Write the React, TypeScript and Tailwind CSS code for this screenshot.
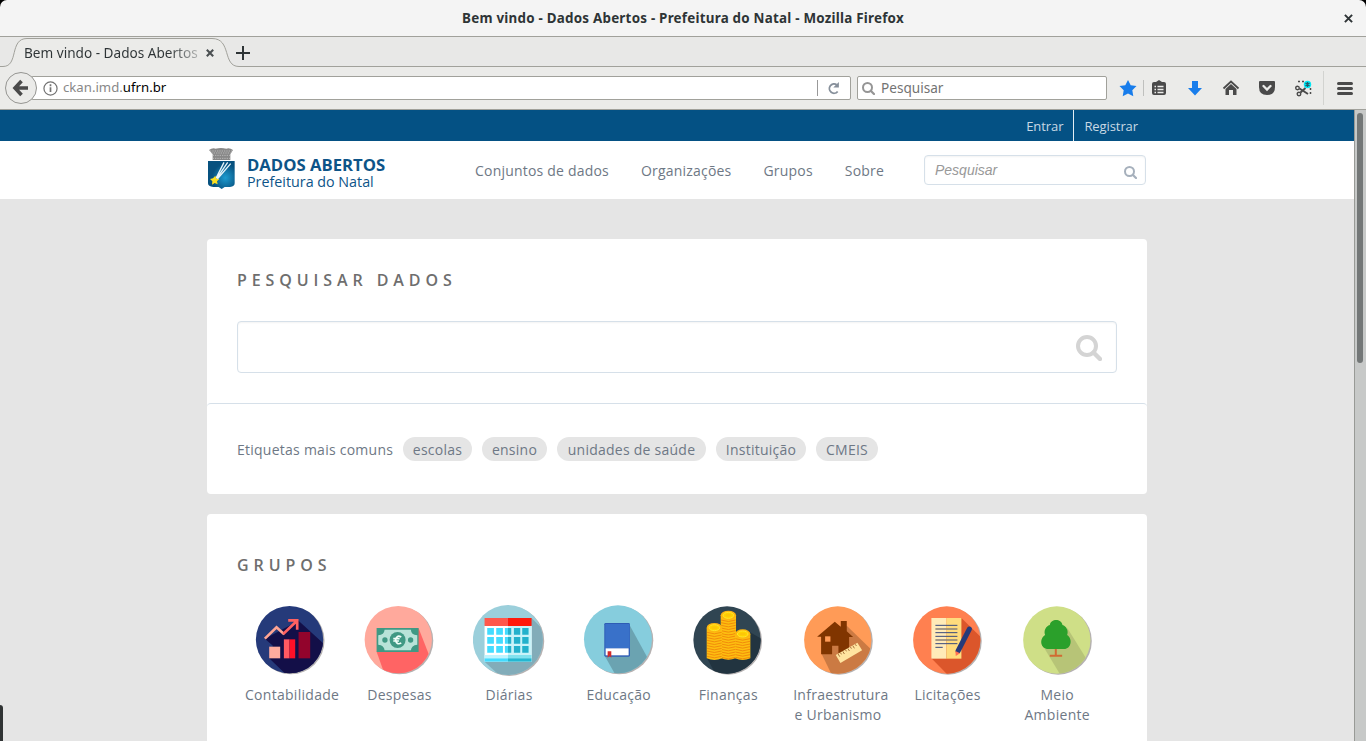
import React from "react";

type Art = { label: string[]; box: string; cx: number; cy: number; r: number; bg: string; shadow: string; shadowColor: string; drawing: React.ReactNode };

const coinStack = (x: number, top: number, bottom: number) => {
  const lines: React.ReactNode[] = [];
  for (let y = top + 14; y < bottom - 4; y += 8) {
    lines.push(<path key={y} d={`M${x - 22} ${y}q22 9 44 0`} stroke="#f28c0a" strokeWidth="3" fill="none" />);
  }
  return (
    <g>
      <path d={`M${x - 23} ${top}V${bottom - 5}q23 10 46 0V${top}z`} fill="#fdbd10" />
      {lines}
      <ellipse cx={x} cy={top} rx="23" ry="14" fill="#fdb510" />
      <ellipse cx={x} cy={top} rx="16" ry="9" fill="#ffd200" stroke="#ffe62a" strokeWidth="3" />
      <ellipse cx={x} cy={top} rx="9" ry="4" fill="#fcc60a" />
    </g>
  );
};

const groups: Art[] = [
  {
    label: ["Contabilidade"], box: "41.4 27 216 216", cx: 148, cy: 134, r: 101, bg: "#253a7a",
    shadow: "M74 131L175 77L260 155V260H160L87 190L98 152z", shadowColor: "#130f48",
    drawing: (
      <g>
        <path d="M74 131L109 97L132 118" stroke="#ffa493" strokeWidth="8" fill="none" />
        <path d="M129 117L169 79M144 76h27v28" stroke="#ff6161" strokeWidth="8" fill="none" />
        <path d="M87 155h33v35H87z" fill="#ffac9e" />
        <path d="M131 133h17v57h-17z" fill="#ff5a62" /><path d="M148 133h17v57h-17z" fill="#ff1028" />
        <path d="M175 111h35v79h-35z" fill="#92042c" />
      </g>
    ),
  },
  {
    label: ["Despesas"], box: "370.2 27 216 216", cx: 476, cy: 134, r: 101, bg: "#ffa99c",
    shadow: "M411 170L537 100L580 210L540 260H443z", shadowColor: "#ff6464",
    drawing: (
      <g>
        <path d="M411 99h126v72H411z" fill="#409984" />
        <path d="M435 104h79q0 15 19 17v28q-18 2-19 17h-79q-1-15-19-17v-28q18-2 19-17z" fill="#b8e3d8" />
        <circle cx="474" cy="135" r="24" fill="#409984" />
        <circle cx="436" cy="135" r="8" fill="#409984" /><circle cx="513" cy="135" r="8" fill="#409984" />
        <path d="M485 126q-14-8-17 9q3 16 17 9M461 131h19M461 138h17" fill="none" stroke="#f3fffa" strokeWidth="5" />
      </g>
    ),
  },
  {
    label: ["Diárias"], box: "39.3 27 216 216", cx: 144, cy: 135, r: 105, bg: "#9bcfdb",
    shadow: "M215 69L270 124V270H150L74 200z", shadowColor: "#82acb9",
    drawing: (
      <g>
        <path d="M74 92h141v108H74z" fill="#fff" /><path d="M144 92h71v108h-71z" fill="#c9f3f9" />
        <path d="M74 69h70v24H74z" fill="#ff574b" /><path d="M144 69h71v24h-71z" fill="#ff190b" />
        {[99, 126, 153].map((y) => (
          <g key={y}>
            <path d={`M82 ${y}h20v20H82zM109 ${y}h20v20h-20zM135 ${y}h9v20h-9z`} fill="#43dcff" />
            <path d={`M144 ${y}h10v20h-10zM162 ${y}h19v20h-19zM187 ${y}h19v20h-19z`} fill="#24b1cc" />
          </g>
        ))}
        <path d="M74 180h70v10H74z" fill="#bef4ff" /><path d="M144 180h71v10h-71z" fill="#82e2ef" />
        <path d="M74 190h70v10H74z" fill="#43dcff" /><path d="M144 190h71v10h-71z" fill="#24b7d1" />
      </g>
    ),
  },
  {
    label: ["Educação"], box: "368.1 27 216 216", cx: 473, cy: 133, r: 102, bg: "#86cddd",
    shadow: "M509 92L590 240L540 270L487 278L433 182z", shadowColor: "#6ba3b1",
    drawing: (
      <g>
        <rect x="432" y="84" width="77" height="101" rx="4" fill="#2e5cb5" />
        <path d="M435 87h73v72h-73z" fill="#3971c9" /><path d="M436 160h69v21h-69z" fill="#fff" />
        <path d="M442 169h11v19l-5-5l-6 5z" fill="#d12b2b" />
      </g>
    ),
  },
  {
    label: ["Finanças"], box: "36.9 27 216 216", cx: 142, cy: 135, r: 101, bg: "#304552",
    shadow: "M211 112L260 140V260H120L82 190z", shadowColor: "#223440",
    drawing: <g>{coinStack(146, 61, 194)}{coinStack(104, 98, 195)}{coinStack(189, 117, 195)}</g>,
  },
  {
    label: ["Infraestrutura", "e Urbanismo"], box: "365.7 27 216 216", cx: 473, cy: 135, r: 101, bg: "#ff9b57",
    shadow: "M425 178L500 92L600 189L510 270H470z", shadowColor: "#cb7a43",
    drawing: (
      <g>
        <path d="M411 125L464 80L482 95V78h18v31l19 17h-12v52h-32v-26h-19v26h-33v-53z" fill="#803500" />
        <path d="M435 124h16v16h-16z" fill="#ff9b57" />
        <path d="M467 180L532 143L546 166L481 204z" fill="#ffe4a0" />
        <path d="M474 177l5 8M481 173l3 5M488 169l5 8M496 164l3 5M503 160l5 8M511 156l3 5M518 152l5 8M526 148l3 5" stroke="#aa733d" strokeWidth="3" />
      </g>
    ),
  },
  {
    label: ["Licitações"], box: "34.8 27 216 216", cx: 139, cy: 135, r: 101, bg: "#ff8050",
    shadow: "M183 69L270 155V270H172L93 190z", shadowColor: "#db562b",
    drawing: (
      <g>
        <path d="M93 69h45v122H93z" fill="#ffebb8" /><path d="M138 69h45v122h-45z" fill="#ffdc7d" />
        <path d="M105 91h66M105 113h66M105 124h66M105 146h66M105 157h22" stroke="#384a7d" strokeWidth="3" />
        <path d="M105 102h66M105 135h66" stroke="#888077" strokeWidth="4" />
        <path d="M207 102L173 168" stroke="#253a7a" strokeWidth="15" strokeLinecap="round" />
        <path d="M165 168l14 7l-13 8z" fill="#ff7052" />
      </g>
    ),
  },
  {
    label: ["Meio", "Ambiente"], box: "363.6 27 216 216", cx: 471, cy: 135, r: 101, bg: "#cfdf87",
    shadow: "M431 155L503 100L590 240L500 270z", shadowColor: "#b7c477",
    drawing: (
      <g>
        <path d="M450 182h37M468 155v28" stroke="#d16b32" strokeWidth="6" />
        <path d="M450 90c3-20 35-20 38 0c12 3 19 18 14 30c18 12 12 42-9 42h-47c-24 0-29-30-10-42c-5-12 2-27 14-30z" fill="#2ba02b" />
      </g>
    ),
  },
];

function GroupIcon({ art, id }: { art: Art; id: string }) {
  return (
    <svg viewBox={art.box} className="h-[72px] w-[72px]">
      <defs><clipPath id={id}><circle cx={art.cx} cy={art.cy} r={art.r} /></clipPath></defs>
      <circle cx={art.cx + 4} cy={art.cy + 3} r={art.r} fill="#b5b1b1" />
      <circle cx={art.cx} cy={art.cy} r={art.r} fill={art.bg} />
      <path d={art.shadow} fill={art.shadowColor} clipPath={`url(#${id})`} />
      {art.drawing}
    </svg>
  );
}

function Magnifier({ className }: { className: string }) {
  return (
    <svg viewBox="0 0 26 26" className={className} fill="none" stroke="currentColor">
      <circle cx="11" cy="11" r="9" strokeWidth="4" /><path d="M17.5 17.5L24 24" strokeWidth="4.4" strokeLinecap="round" />
    </svg>
  );
}

function Crest() {
  return (
    <svg viewBox="50 36 84 126" className="h-[42px] w-[28px]">
      <defs><radialGradient id="shield" cx="65%" cy="60%"><stop offset="0" stopColor="#1d9bd0" /><stop offset="1" stopColor="#07517f" /></radialGradient></defs>
      <path d="M56 45q10-7 20-4q16-4 32 0q10-3 20 4l-8 13v17H67V58z" fill="#888" />
      <path d="M59 48h66M63 54h58M67 61h52M67 70h52" stroke="#d0d0d0" strokeWidth="2" strokeDasharray="4 3" />
      <path d="M53 78h80v67q0 10-14 11h-16l-9 6l-9-6H69q-16-1-16-11z" fill="url(#shield)" />
      <path d="M77 130L101 82M79 131L112 82M81 132L121 86" stroke="#e8f4fa" strokeWidth="4" />
      <path d="M75 122l3 9l9 1l-7 7l2 9l-9-4l-8 5l1-10l-7-7l9-2z" fill="#fbdf20" />
    </svg>
  );
}

function BrowserChrome() {
  return (
    <div className="h-[110px] shrink-0 bg-[#e8e8e7] font-['Noto_Sans',sans-serif] text-[13.6px] text-[#2e3436]">
      <div className="bg-black">
        <div className="relative flex h-[37px] items-center justify-center rounded-t-[7px] border-b border-[#a1a19b] bg-[#f4f4f4]">
          <span className="whitespace-nowrap text-[13.4px] font-bold tracking-[0.23px]">Bem vindo - Dados Abertos - Prefeitura do Natal - Mozilla Firefox</span>
          <svg viewBox="0 0 10 10" className="absolute right-[13px] top-[14px] h-[9px] w-[9px] stroke-[#2e3436]" strokeWidth="2.2"><path d="M1 1l8 8M9 1L1 9" /></svg>
        </div>
      </div>
      <div className="relative flex h-[30px] items-center">
        <svg viewBox="0 37 1366 30" className="absolute inset-0 h-[30px] w-[1366px]" fill="none">
          <path d="M0 66.5h3C19 66.5 9 38.500 27 38.500H212C232 38.500 222 66.500 239 66.500H1366V68H0z" fill="#ebebe9" />
          <path d="M0 66.500h3C19 66.500 9 38.500 27 38.500H212C232 38.500 222 66.500 239 66.500H1366" stroke="#a1a19b" />
        </svg>
        <span className="relative ml-6 mt-[2px] w-[176px] whitespace-nowrap bg-gradient-to-r from-[#2e3436] from-82% to-[#2e343640] bg-clip-text text-[13.6px] text-transparent">Bem vindo - Dados Abertos</span>
        <svg viewBox="0 0 10 10" className="relative ml-[6px] mt-[2px] h-[8px] w-[8px] stroke-[#4b5052]" strokeWidth="2.600"><path d="M1 1l8 8M9 1L1 9" /></svg>
        <svg viewBox="0 0 14 14" className="relative ml-[22px] mt-[2px] h-[14px] w-[14px] stroke-[#2e3436]" strokeWidth="2"><path d="M0 7h14M7 0v14" /></svg>
      </div>
      <div className="flex h-[43px] items-center border-b border-[#a1a19b] bg-[#ebebe9] pl-1">
        <svg viewBox="0 0 34 34" className="relative z-10 h-[34px] w-[34px] shrink-0">
          <circle cx="17" cy="17" r="15.500" fill="#ebebe9" stroke="#959592" /><path d="M17.500 10L11 17l6.500 7M11.500 17H24" fill="none" stroke="#4a4a4a" strokeWidth="3.600" />
        </svg>
        <div className="-ml-[7px] flex h-[24px] w-[820px] shrink-0 items-center rounded-[2px] border border-[#a1a19b] bg-white">
          <svg viewBox="0 0 16 16" className="ml-[11px] h-[15px] w-[15px]" fill="none" stroke="#737373"><circle cx="8" cy="8" r="7" strokeWidth="1.300" /><path d="M8 6.700v5M8 3.500v2" strokeWidth="1.800" /></svg>
          <span className="ml-[5px] text-[13.2px] text-[#888]">ckan.imd.<span className="text-black">ufrn.br</span></span>
          <span className="ml-auto mr-[9px] h-[16px] w-px bg-[#999]" />
          <svg viewBox="0 0 14 14" className="mr-[10px] h-[13px] w-[13px]" fill="none"><path d="M11.500 10.200A5 5 0 1 1 10.500 3" stroke="#87909b" strokeWidth="2" /><path d="M12.800 0v6H6.800z" fill="#87909b" /></svg>
        </div>
        <div className="ml-[6px] flex h-[24px] w-[250px] shrink-0 items-center rounded-[2px] border border-[#a1a19b] bg-white text-[#737373]">
          <Magnifier className="ml-[4px] h-[13px] w-[13px] text-[#959595]" /><span className="ml-[6px]">Pesquisar</span>
        </div>
        <svg viewBox="1107 68 259 41" className="h-[41px] w-[259px] shrink-0">
          <path d="M1128 80l2.700 5.300 5.800.8-4.200 4.200 1 5.900-5.300-2.800-5.300 2.800 1-5.900-4.200-4.200 5.800-.8z" fill="#187deb" />
          <path d="M1143.500 80v16" stroke="#bfc0be" />
          <path d="M1154 82h2l3-2 3 2h2q2 0 2 2v9q0 2-2 2h-10q-2 0-2-2v-9q0-2 2-2z" fill="#4a4a4a" />
          <path d="M1154.500 86.500h1.500M1157.500 86.500h6M1154.500 89.500h1.500M1157.500 89.500h6M1154.500 92.500h1.500M1157.500 92.500h6" stroke="#ebebe9" strokeWidth="1.500" />
          <path d="M1192 81h6v7h4l-7 7.500-7-7.500h4z" fill="#187deb" />
          <path d="M1223.500 88.500l7.500-7 7.500 7" fill="none" stroke="#4a4a4a" strokeWidth="1.800" /><path d="M1231 84l5.500 5v6h-3.500v-5h-4v5h-3.500v-6z" fill="#4a4a4a" />
          <path d="M1259 82q0-1 1-1h14q1 0 1 1v5q0 8-8 8t-8-8z" fill="#4a4a4a" /><path d="M1263.500 86l3.500 3.500 3.500-3.500" fill="none" stroke="#ebebe9" strokeWidth="2.300" strokeLinecap="round" />
          <g fill="none" stroke="#4a4a4a"><circle cx="1297.500" cy="88" r="1.800" strokeWidth="1.400" /><circle cx="1299" cy="94" r="1.800" strokeWidth="1.400" /><path d="M1299.500 88.500l8.500 5.500M1300.500 92.500l5-4.500" strokeWidth="1.900" /><path d="M1298 81.500h7M1310.500 88v7" strokeWidth="1.500" strokeDasharray="2 2" /></g>
          <circle cx="1307.500" cy="84.500" r="3.700" fill="#00e8f5" /><path d="M1307.500 82v5M1305.500 83l4 3M1309.500 83l-4 3" stroke="#235b68" strokeWidth="1.200" />
          <path d="M1323.500 71v34" stroke="#d2d3d0" /><path d="M1338.500 83.500h13M1338.500 88.500h13M1338.500 93.500h13" stroke="#4a4a4a" strokeWidth="3" strokeLinecap="round" />
        </svg>
      </div>
    </div>
  );
}

const tags = [
  { text: "escolas", width: "w-[69px]" }, { text: "ensino", width: "w-[65px]" }, { text: "unidades de saúde", width: "w-[149px]" },
  { text: "Instituição", width: "w-[90px]" }, { text: "CMEIS", width: "w-[62px]" },
];

export default function App() {
  return (
    <div className="relative flex h-[741px] w-[1366px] flex-col overflow-hidden">
      <BrowserChrome />
      <div className="flex min-h-0 flex-1">
        <div className="w-[1354px] overflow-hidden bg-[#e5e5e5] font-['Open_Sans',sans-serif] text-[14px] text-[#6e7885]">
          <div className="h-[31px] bg-[#045184]">
            <div className="mx-auto flex h-full w-[940px] justify-end text-[13px] leading-[32px] tracking-[-0.08px] text-[#c8d9e5]">
              <span className="border-r border-[#e4edf3] px-[10px]">Entrar</span><span className="pl-[10px] pr-[9px]">Registrar</span>
            </div>
          </div>
          <div className="h-[58px] bg-white">
            <div className="mx-auto flex h-full w-[940px]">
              <div className="flex w-[268px] pt-[6px]">
                <Crest />
                <div className="ml-[12px] whitespace-nowrap pt-[9px] text-[#0d5488]">
                  <div className="text-[16.7px] font-bold leading-[18px]">DADOS ABERTOS</div>
                  <div className="text-[14.3px] leading-[15px]">Prefeitura do Natal</div>
                </div>
              </div>
              <nav className="flex gap-[32px] whitespace-nowrap pt-px leading-[58px] tracking-[0.2px]">
                <span>Conjuntos de dados</span><span>Organizações</span><span>Grupos</span><span>Sobre</span>
              </nav>
              <div className="ml-auto mr-px mt-[14px] flex h-[30px] w-[222px] items-center rounded-[4px] border border-[#d6e0e9] px-[10px] shadow-[inset_0_1px_2px_#0000000d]">
                <span className="pt-px font-['Liberation_Sans',sans-serif] text-[14px] italic text-[#999]">Pesquisar</span>
                <Magnifier className="ml-auto mr-[-2px] mt-[4px] h-[13px] w-[13px] text-[#a6b0bc]" />
              </div>
            </div>
          </div>
          <main className="mx-auto w-[940px] pt-[40px]">
            <section className="h-[255px] rounded-[4px] bg-white">
              <div className="h-[164px] px-[30px] pt-[30px]">
                <h1 className="text-[16px] font-semibold leading-[22px] tracking-[4.9px] text-[#6e6e6e]">PESQUISAR DADOS</h1>
                <div className="mt-[30px] flex h-[52px] items-center justify-end rounded-[4px] border border-[#d6e0e9] pr-[14px] shadow-[inset_0_1px_2px_#0000000d]"><Magnifier className="mt-[2px] h-[26px] w-[26px] text-[#d4d4d4]" /></div>
              </div>
              <div className="flex h-[91px] items-center gap-[10px] rounded-t-[4px] border-t border-[#d6e0e9] px-[30px] tracking-[0.25px]">
                <span className="w-[156px] whitespace-nowrap">Etiquetas mais comuns</span>
                {tags.map((t) => <span key={t.text} className={`${t.width} h-[24px] whitespace-nowrap rounded-full bg-[#e5e5e5] text-center leading-[26px]`}>{t.text}</span>)}
              </div>
            </section>
            <section className="mt-[20px] h-[250px] rounded-t-[4px] bg-white pt-[40px]">
              <h2 className="pl-[30px] text-[16px] font-semibold leading-[22px] tracking-[4.9px] text-[#6e6e6e]">GRUPOS</h2>
              <div className="ml-[28px] mt-[28px] flex">
                {groups.map((g, i) => (
                  <div key={g.label[0]} className="flex w-[109.625px] shrink-0 flex-col items-center">
                    <GroupIcon art={g} id={`disc${i}`} />
                    <div className="mt-[9px] w-[89.6px] whitespace-nowrap text-center leading-[20px] tracking-[0.28px]">
                      {g.label.map((l) => <div key={l}>{l}</div>)}
                    </div>
                  </div>
                ))}
              </div>
            </section>
          </main>
        </div>
        <div className="w-[12px] border-l border-[#989a96] bg-[#c7c9c8] pl-[2px] pt-[3px]"><div className="h-[250px] w-[6px] rounded-full bg-[#737777]" /></div>
      </div>
      <div className="absolute bottom-0 left-0 h-[36px] w-[3px] rounded-tr-[3px] bg-[#303334]" />
    </div>
  );
}
